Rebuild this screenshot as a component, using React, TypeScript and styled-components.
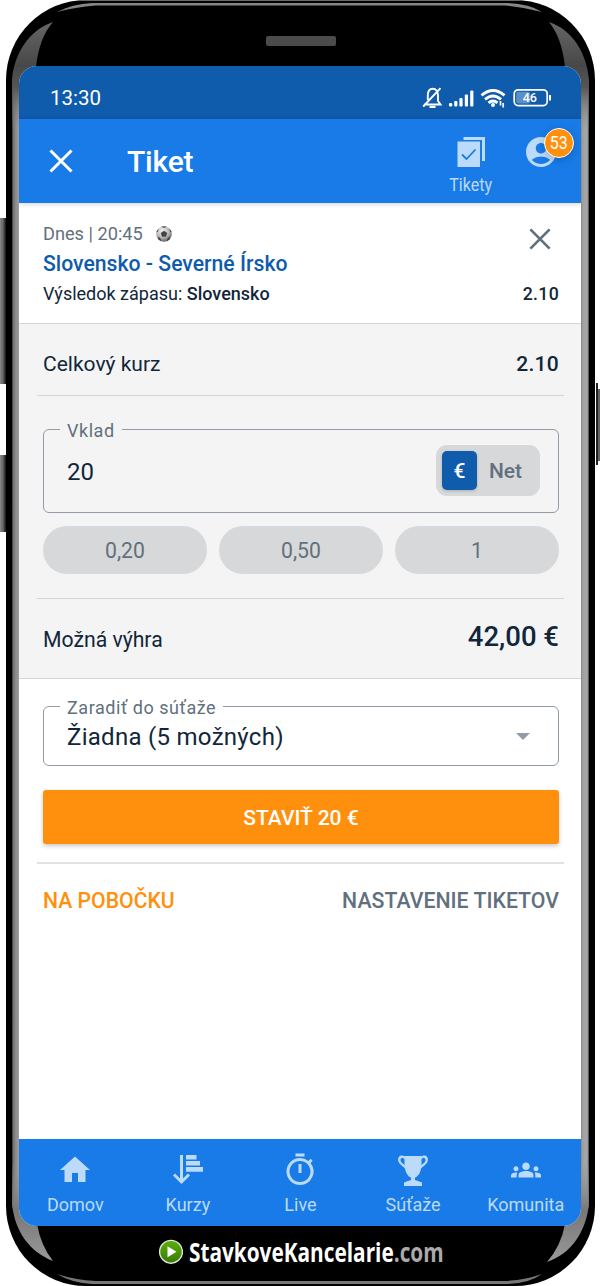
import React from "react";
import styled, { createGlobalStyle } from "styled-components";
import { MdHome, MdOutlineTimer, MdGroups, MdAccountCircle } from "react-icons/md";

const c = {
  blue: "#187be8",
  deep: "#0f5bac",
  pale: "#bcdafa",
  ink: "#12263a",
  muted: "#62707d",
  line: "#d5d6d8",
  field: "#929ca6",
  panel: "#f4f4f4",
  chip: "#d6d8da",
  orange: "#ff900e",
};

const Global = createGlobalStyle`
  * { box-sizing: border-box; }
  body { margin: 0; background: #fff; font-family: Roboto, "Liberation Sans", sans-serif; }
  button { font: inherit; border: 0; padding: 0; background: none; cursor: pointer; }
`;

const Phone = styled.div`
  position: relative;
  width: 600px;
  height: 1286px;
  padding: 66px 19px 0;
  overflow: hidden;
`;

const Shell = styled.svg`
  position: absolute;
  inset: 0;
`;

const Screen = styled.div`
  position: relative;
  display: flex;
  flex-direction: column;
  width: 562px;
  height: 1160px;
  border-radius: 18px;
  overflow: hidden;
  background: #fff;
`;

const Text = styled.span<{ $size: number; $weight?: number; $color?: string; $track?: number; $line?: number }>`
  font-size: ${(p) => p.$size}px;
  font-weight: ${(p) => p.$weight ?? 400};
  color: ${(p) => p.$color ?? c.ink};
  letter-spacing: ${(p) => p.$track ?? 0}px;
  line-height: ${(p) => p.$line ?? 30}px;
  white-space: pre;
`;

const Strong = styled.b`
  font-weight: 500;
`;

const StatusBar = styled.div`
  display: flex;
  align-items: center;
  justify-content: space-between;
  height: 53px;
  padding: 10px 30px 0 31px;
  background: ${c.deep};
`;

const Header = styled.header`
  display: flex;
  height: 84px;
  padding: 0 6px 0 30px;
  background: ${c.blue};
  box-shadow: 0 1px 5px rgba(0, 0, 0, 0.18);
  position: relative;
`;

const CloseButton = styled.button`
  display: flex;
  align-items: center;
  width: 78px;
`;

const Title = styled.h1`
  flex: 1;
  margin: 0;
  font-size: 30px;
  font-weight: 500;
  line-height: 86px;
  letter-spacing: -0.2px;
  color: #fff;
`;

const Tickets = styled.div`
  display: flex;
  flex-direction: column;
  align-items: center;
  gap: 2px;
  width: 60px;
  padding-top: 17px;
  color: ${c.pale};
`;

const Narrow = styled.span<{ $size: number; $scale: number }>`
  font-size: ${(p) => p.$size}px;
  line-height: 30px;
  white-space: nowrap;
  transform: scaleX(${(p) => p.$scale});
`;

const Account = styled.div`
  position: relative;
  width: 52px;
  margin-left: 22px;
  padding-top: 15px;
  color: ${c.pale};
  svg { display: block; }
`;

const Badge = styled.div`
  position: absolute;
  left: 21px;
  top: 9px;
  display: flex;
  align-items: center;
  justify-content: center;
  width: 30px;
  height: 30px;
  border: 1.5px solid #fff;
  border-radius: 50%;
  background: ${c.orange};
  color: #fff;
  box-shadow: 0 2px 8px rgba(0, 0, 0, 0.2);
`;

const Bet = styled.section`
  display: flex;
  justify-content: space-between;
  height: 121px;
  padding: 16px 22px 0 24px;
  border-bottom: 1px solid ${c.line};
`;

const Lines = styled.div<{ $end?: boolean }>`
  display: flex;
  flex-direction: column;
  align-items: ${(p) => (p.$end ? "flex-end" : "flex-start")};
  height: 90px;
  justify-content: space-between;
`;

const Inline = styled.div`
  display: flex;
  align-items: center;
  gap: 13px;
  height: 30px;
`;

const Remove = styled.button`
  display: block;
  padding: 9px 8px 0 0;
  svg { display: block; }
`;

const Panel = styled.section`
  height: 355px;
  padding: 0 17px 0 18px;
  background: ${c.panel};
  border-bottom: 1px solid ${c.line};
`;

const Row = styled.div<{ $h: number; $top?: number; $align?: string }>`
  display: flex;
  align-items: ${(p) => p.$align ?? "center"};
  justify-content: space-between;
  height: ${(p) => p.$h}px;
  padding: ${(p) => p.$top ?? 0}px 5px 0 6px;
`;

const Stake = styled.div`
  height: 204px;
  padding: 25px 5px 0 6px;
  border-top: 1px solid ${c.line};
  border-bottom: 1px solid ${c.line};
`;

const Field = styled.fieldset<{ $h: number }>`
  display: flex;
  min-width: 0;
  height: ${(p) => p.$h}px;
  margin: 0;
  padding: 0 17px 0 16px;
  border: 1.5px solid ${c.field};
  border-radius: 6px;
`;

const Legend = styled.legend`
  height: 16px;
  padding: 0 7px;
  font-size: 18px;
  line-height: 19px;
  letter-spacing: 0.55px;
  color: ${c.muted};
`;

const FieldBody = styled.div<{ $h: number; $top?: number }>`
  display: flex;
  flex: 1;
  align-items: center;
  justify-content: space-between;
  height: ${(p) => p.$h}px;
  padding-left: 7px;
  > span { padding-top: ${(p) => p.$top ?? 0}px; }
`;

const Toggle = styled.div`
  display: flex;
  width: 104px;
  height: 51px;
  margin-right: 1px;
  padding: 6px;
  border-radius: 11px;
  background: ${c.chip};
`;

const Option = styled.button<{ $on?: boolean }>`
  width: ${(p) => (p.$on ? 35 : 57)}px;
  height: 39px;
  padding-top: 1px;
  border-radius: 5px;
  background: ${(p) => (p.$on ? c.deep : "transparent")};
  box-shadow: ${(p) => (p.$on ? "0 1px 3px rgba(0,0,0,.2)" : "none")};
`;

const Chips = styled.div`
  display: grid;
  grid-template-columns: repeat(3, 1fr);
  gap: 12px;
  margin-top: 13px;
`;

const Chip = styled.button`
  height: 48px;
  padding-top: 1px;
  border-radius: 24px;
  background: ${c.chip};
`;

const Actions = styled.section`
  flex: 1;
  padding: 19px 17px 0 18px;
`;

const Inset = styled.div`
  height: 166px;
  padding: 0 5px 0 6px;
  border-bottom: 2px solid #e1e1e2;
`;

const Submit = styled.button`
  display: block;
  width: 100%;
  height: 54px;
  margin-top: 24px;
  padding-top: 1px;
  border-radius: 3px;
  background: ${c.orange};
  box-shadow: 0 2px 4px rgba(0, 0, 0, 0.22);
`;

const Caret = styled.div`
  margin-right: 11px;
  border: 7.5px solid transparent;
  border-top-color: ${c.field};
  border-bottom: 0;
`;

const Nav = styled.nav`
  display: grid;
  grid-template-columns: repeat(5, 112.6px);
  height: 87px;
  background: ${c.blue};
`;

const NavItem = styled.a`
  display: flex;
  flex-direction: column;
  align-items: center;
  padding-top: 12px;
  color: ${c.pale};
`;

const NavIcon = styled.div`
  display: flex;
  align-items: center;
  justify-content: center;
  height: 38px;
`;

const Brand = styled.footer`
  position: relative;
  display: flex;
  align-items: center;
  height: 52px;
  padding-left: 139px;
`;

const BrandName = styled.div`
  margin-left: 6px;
  font-family: "Open Sans", sans-serif;
  font-size: 27px;
  font-weight: 700;
  line-height: 40px;
  color: #fff;
  white-space: nowrap;
  transform: scaleX(0.77);
  transform-origin: left;
  span { color: #aaa; }
`;

const PhoneShell = () => (
  <Shell width="600" height="1286" viewBox="0 0 600 1286">
    <defs>
      <linearGradient id="left" x1="0" x2="1" y1="0" y2="0">
        <stop offset="0" stopColor="#333" />
        <stop offset=".2" stopColor="#777" />
        <stop offset=".5" stopColor="#8c8c8c" />
        <stop offset="1" stopColor="#a2a2a2" />
      </linearGradient>
      <linearGradient id="right" x1="0" x2="1" y1="0" y2="0">
        <stop offset="0" stopColor="#777" />
        <stop offset=".3" stopColor="#a0a0a0" />
        <stop offset=".8" stopColor="#a8a8a8" />
        <stop offset="1" stopColor="#444" />
      </linearGradient>
      <linearGradient id="cornerTop" x1="0" x2="0" y1="0" y2="1">
        <stop offset="0" stopColor="#666" />
        <stop offset=".4" stopColor="#484848" />
        <stop offset=".6" stopColor="#555" />
        <stop offset="1" stopColor="#8a8a8a" stopOpacity="0" />
      </linearGradient>
      <linearGradient id="cornerBottom" x1="0" x2="0" y1="0" y2="1">
        <stop offset="0" stopColor="#999" stopOpacity="0" />
        <stop offset=".5" stopColor="#777" />
        <stop offset="1" stopColor="#999" />
      </linearGradient>
      <linearGradient id="key" x1="0" x2="1" y1="0" y2="0">
        <stop offset="0" stopColor="#888" />
        <stop offset=".5" stopColor="#666" />
        <stop offset="1" stopColor="#111" />
      </linearGradient>
    </defs>
    <path d="M0 218h6v166H0zM0 455h6v77H0z" fill="url(#key)" />
    <path d="M596 383h2v82h-2z" fill="#222" />
    <path d="M598 389h2v72h-2z" fill="#666" />
    <path d="M86 0H515A80 80 0 0 1 595 80V1206A80 80 0 0 1 515 1286H86A80 80 0 0 1 6 1206V80A80 80 0 0 1 86 0z" fill="#000" />
    <path d="M80 .5H520" stroke="#666b62" />
    <path d="M57 12Q72 4 92 3H508Q530 4 542 12Q525 7.500 505 5.500H96Q75 7 57 12z" fill="#858585" />
    <path d="M57 1274Q72 1283 92 1284H508Q530 1283 542 1274Q525 1280 505 1281H96Q75 1280 57 1274z" fill="#777" />
    <path d="M12 82L20 66V1225L12 1206z" fill="url(#left)" />
    <path d="M589 82L580 66V1225L589 1206z" fill="url(#right)" />
    <path d="M12 80C14 54 29 30 53 22Q39 38 36 67L20 130H12z" fill="url(#cornerTop)" />
    <path d="M589 80C587 54 573 30 549 22Q562 38 565 67L580 130H589z" fill="url(#cornerTop)" />
    <path d="M12 1204C15 1232 30 1252 53 1261Q41 1246 37 1224L20 1160H12z" fill="url(#cornerBottom)" />
    <path d="M589 1204C586 1232 571 1254 547 1262Q561 1246 565 1224L580 1160H589z" fill="url(#cornerBottom)" />
    <rect x="266" y="36" width="70" height="10" rx="2" fill="#4b4b4b" />
  </Shell>
);

const Cross = ({ size, color, weight }: { size: number; color: string; weight: number }) => (
  <svg width={size} height={size} viewBox="0 0 24 24" fill="none" stroke={color} strokeWidth={weight}>
    <path d="M1.500 1.500l21 21M22.500 1.500l-21 21" />
  </svg>
);

const StatusIcons = () => (
  <svg width="130" height="24" viewBox="0 0 130 24" fill="none" stroke="#fff" strokeWidth="1.900">
    <path d="M3 18.500h16.500L17 15V9.500C17 5.500 15 2.800 11.800 2.800S6.800 5.500 6.800 9.500V14M2.200 20.500L19.500 2.200" />
    <path d="M8.500 20.800h6" strokeWidth="2.200" />
    <g stroke="none" fill="#fff">
      <rect x="28" y="17" width="3.200" height="3.500" rx="1.200" />
      <rect x="33.200" y="15" width="3.200" height="5.500" rx="1" />
      <rect x="38.400" y="12" width="3.200" height="8.500" rx="1" />
      <rect x="43.800" y="8.500" width="3.200" height="12" rx="1" />
      <rect x="49.200" y="4.500" width="3.200" height="16" rx="1" />
    </g>
    <path d="M60.500 9.300Q72 -0.500 83.500 9.300M64 13.300Q72 6.500 80 13.300M67.500 16.800Q72 13 76.500 16.800" strokeWidth="2.900" />
    <circle cx="72" cy="19" r="2" fill="#fff" stroke="none" />
    <path d="M79.500 15v4.500M82.200 17v4.500" strokeWidth="1.700" />
    <rect x="93.200" y="3.800" width="33" height="15.800" rx="4" strokeWidth="1.700" />
    <rect x="95.200" y="5.800" width="14" height="11.800" rx="2" fill="#5a8fca" stroke="none" />
    <path d="M129 9v5.500" strokeWidth="2" />
    <text x="108.800" y="16.200" textAnchor="middle" fontSize="12.500" fontWeight="500" fill="#fff" stroke="none">46</text>
  </svg>
);

const TicketsIcon = () => (
  <svg width="28" height="32" viewBox="0 0 28 32">
    <path d="M6.500 1H28v24h-3V4H6.500z" fill={c.pale} />
    <rect x="0.500" y="5.500" width="22.500" height="25.500" fill={c.pale} />
    <path d="M5 18.500l4.500 4.500L18.500 13.500" fill="none" stroke={c.blue} strokeWidth="1.800" />
  </svg>
);

const Ball = () => (
  <svg width="16" height="16" viewBox="0 0 16 16">
    <defs>
      <radialGradient id="ball" cx=".4" cy=".3" r=".7">
        <stop offset="0" stopColor="#f2f2f2" />
        <stop offset=".6" stopColor="#b8b8b8" />
        <stop offset="1" stopColor="#666" />
      </radialGradient>
    </defs>
    <circle cx="8" cy="8" r="7.800" fill="url(#ball)" />
    <path d="M8 4.800l3.200 2.300-1.200 3.700H6L4.800 7.100zM5 .8l3 1 3-1L8 .2zM.3 6.500L2 5.500 2.600 2.800.8 5zM15.700 6.500L14 5.500l-.6-2.700L15.200 5zM2 13l.6-2.500L4.800 13l.2 2.200zM14 13l-.6-2.500L11.200 13l-.2 2.200z" fill="#444" />
  </svg>
);

const OddsIcon = () => (
  <svg width="30" height="30" viewBox="0 0 30 30">
    <path d="M8.500 0v26M1 19.500l7.500 7.500L16 19.500" fill="none" stroke={c.pale} strokeWidth="3" />
    <path d="M13 0h10.500v4.500H13zM13 6h14v4.500H13zM13 12h17v4.700H13z" fill={c.pale} />
  </svg>
);

const Trophy = () => (
  <svg width="30" height="31" viewBox="0 0 30 31">
    <path d="M6.500 1h17v7.500c0 8-3 13-6.500 14v2.500c3 .8 5 1.800 7 2.500V31H6v-3.500c2-.7 4-1.700 7-2.500V22.500C9.500 21.500 6.500 16 6.500 8.500z" fill={c.pale} />
    <path d="M8 4C5 0 1 1.500 1.300 5.500c.3 3.500 4 4 7.200 8M22 4c3-4 7-2.500 6.700 1.500-.3 3.500-4 4-7.200 8" fill="none" stroke={c.pale} strokeWidth="2.400" />
  </svg>
);

const Play = () => (
  <svg width="25" height="26" viewBox="0 0 25 26">
    <defs>
      <linearGradient id="play" x1="0" x2="0" y1="0" y2="1">
        <stop offset="0" stopColor="#5cb00c" />
        <stop offset="1" stopColor="#367a02" />
      </linearGradient>
    </defs>
    <circle cx="13" cy="12.800" r="11.400" fill="url(#play)" stroke="#dfe8d8" strokeWidth="1.400" />
    <path d="M9.500 7.300l9 5.500-9 5.500z" fill="#fff" />
  </svg>
);

const navItems = [
  { label: "Domov", icon: <MdHome size={36} /> },
  { label: "Kurzy", icon: <OddsIcon /> },
  { label: "Live", icon: <MdOutlineTimer size={36} /> },
  { label: "Súťaže", icon: <Trophy /> },
  { label: "Komunita", icon: <MdGroups size={30} /> },
];

export default function App() {
  return (
    <>
      <Global />
      <Phone>
        <PhoneShell />
        <Screen>
          <StatusBar>
            <Text $size={20.5} $color="#fff">13:30</Text>
            <StatusIcons />
          </StatusBar>
          <Header>
            <CloseButton aria-label="Zavrieť">
              <Cross size={24} color="#fff" weight={3} />
            </CloseButton>
            <Title>Tiket</Title>
            <Tickets>
              <TicketsIcon />
              <Narrow $size={18.5} $scale={0.87}>Tikety</Narrow>
            </Tickets>
            <Account>
              <MdAccountCircle size={36} />
              <Badge>
                <Narrow $size={19} $scale={0.84}>53</Narrow>
              </Badge>
            </Account>
          </Header>
          <Bet>
            <Lines>
              <Inline>
                <Text $size={18.2} $color={c.muted}>Dnes | 20:45</Text>
                <Ball />
              </Inline>
              <Text $size={21.2} $weight={500} $color={c.deep}>Slovensko - Severné Írsko</Text>
              <Text $size={18}>
                Výsledok zápasu: <Strong>Slovensko</Strong>
              </Text>
            </Lines>
            <Lines $end>
              <Remove aria-label="Odstrániť">
                <Cross size={22} color={c.muted} weight={2.9} />
              </Remove>
              <Text $size={17.7} $weight={500} $track={0.3}>2.10</Text>
            </Lines>
          </Bet>
          <Panel>
            <Row $h={71} $top={8}>
              <Text $size={21}>Celkový kurz</Text>
              <Text $size={21} $weight={500} $track={0.3}>2.10</Text>
            </Row>
            <Stake>
              <Field $h={92}>
                <Legend>Vklad</Legend>
                <FieldBody $h={66} $top={4}>
                  <Text $size={24}>20</Text>
                  <Toggle>
                    <Option $on>
                      <Text $size={21} $weight={500} $color="#fff">€</Text>
                    </Option>
                    <Option>
                      <Text $size={21} $weight={500} $color={c.muted}>Net</Text>
                    </Option>
                  </Toggle>
                </FieldBody>
              </Field>
              <Chips>
                {["0,20", "0,50", "1"].map((v) => (
                  <Chip key={v}>
                    <Text $size={21.2} $color={c.muted}>{v}</Text>
                  </Chip>
                ))}
              </Chips>
            </Stake>
            <Row $h={79} $top={23} $align="flex-start">
              <Text $size={21.2} $line={36}>Možná výhra</Text>
              <Text $size={27.5} $weight={500}>42,00 €</Text>
            </Row>
          </Panel>
          <Actions>
            <Inset>
              <Field $h={68}>
                <Legend>Zaradiť do súťaže</Legend>
                <FieldBody $h={44} $top={1}>
                  <Text $size={24} $track={0.28}>Žiadna (5 možných)</Text>
                  <Caret />
                </FieldBody>
              </Field>
              <Submit>
                <Text $size={21} $weight={500} $color="#fff">STAVIŤ 20 €</Text>
              </Submit>
            </Inset>
            <Row $h={74}>
              <Text $size={21.2} $weight={500} $color={c.orange}>NA POBOČKU</Text>
              <Text $size={21.3} $weight={500} $color={c.muted}>NASTAVENIE TIKETOV</Text>
            </Row>
          </Actions>
          <Nav>
            {navItems.map((item) => (
              <NavItem key={item.label}>
                <NavIcon>{item.icon}</NavIcon>
                <Text $size={18} $line={31} $color={c.pale}>{item.label}</Text>
              </NavItem>
            ))}
          </Nav>
        </Screen>
        <Brand>
          <Play />
          <BrandName>
            StavkoveKancelarie<span>.com</span>
          </BrandName>
        </Brand>
      </Phone>
    </>
  );
}
